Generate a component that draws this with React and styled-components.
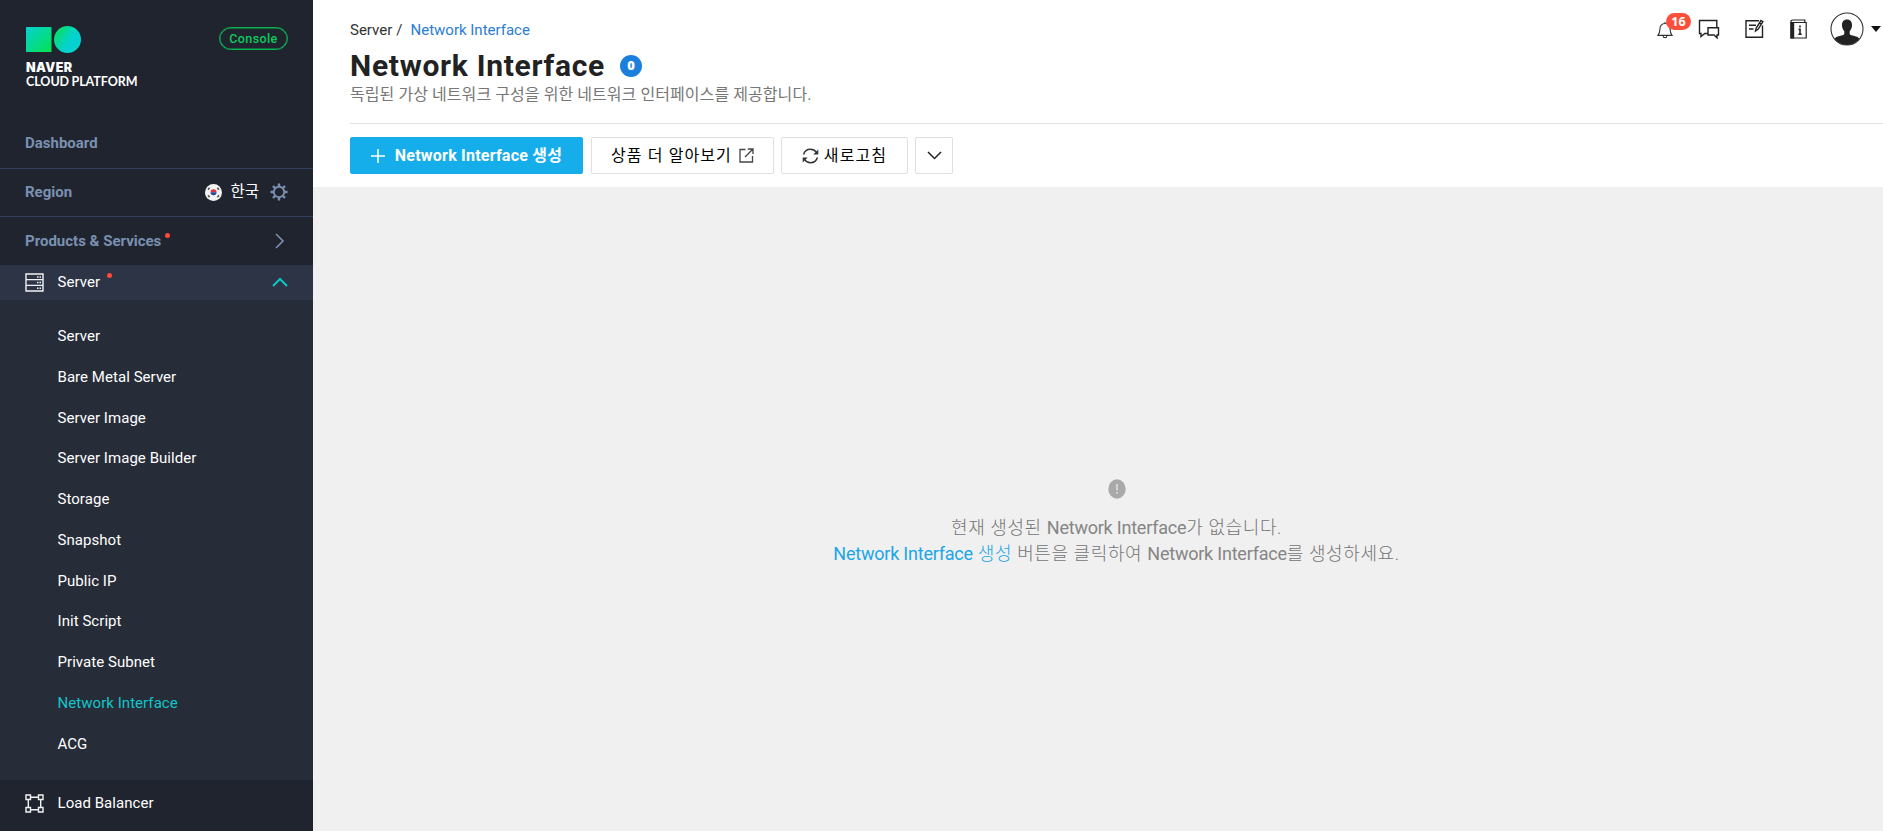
import React from "react";
import styled, { createGlobalStyle } from "styled-components";

const Global = createGlobalStyle`
  * { box-sizing: border-box; }
  body {
    margin: 0;
    background: #fff;
    font-family: Roboto, "Noto Sans CJK KR", sans-serif;
    font-size: 15px;
    color: #222;
    overflow: hidden;
  }
  svg { display: block; flex: none; }
`;

const Page = styled.div`
  display: grid;
  grid-template-columns: 313px minmax(0, 1fr);
  height: 831px;
  overflow: hidden;
`;

/* ---------- sidebar ---------- */

const Sidebar = styled.nav`
  display: flex;
  flex-direction: column;
  background: #20242f;
  color: #fff;
`;

const BrandBar = styled.header`
  display: flex;
  justify-content: space-between;
  align-items: flex-start;
  height: 120px;
  padding: 25px 25px 0 26px;
`;

const Brand = styled.div`
  display: flex;
  flex-direction: column;
`;

const BrandName = styled.span`
  margin-top: ${(p) => (p.$strong ? "8px" : "0")};
  font-family: ${(p) => (p.$strong ? "Inter" : "Lato")}, sans-serif;
  font-size: 12.5px;
  font-weight: ${(p) => (p.$strong ? 900 : 700)};
  line-height: 13.5px;
  letter-spacing: ${(p) => (p.$strong ? "0.45px" : "-0.05px")};
  word-spacing: ${(p) => (p.$strong ? "0" : "-0.6px")};
  white-space: nowrap;
`;

const ConsoleTag = styled.span`
  width: 69px;
  height: 23px;
  margin-top: 2px;
  border: 1.5px solid #0ab253;
  border-radius: 12px;
  color: #0ccb5c;
  box-shadow: inset 0 0 0 0.5px #0ab253;
  font-size: 12.5px;
  font-weight: 500;
  line-height: 21px;
  text-align: center;
  letter-spacing: 0.4px;
`;

const MainRow = styled.div`
  display: flex;
  align-items: center;
  height: ${(p) => p.$height}px;
  padding: 0 25px 0 25px;
  border-bottom: ${(p) => (p.$line ? "1px solid #2f405c" : "none")};
`;

const RowTitle = styled.span`
  padding-bottom: ${(p) => p.$lift || 0}px;
  color: #7a90b0;
  font-size: 15px;
  font-weight: 700;
`;

const NewDot = styled.i`
  align-self: flex-start;
  width: 5px;
  height: 5px;
  margin: ${(p) => p.$top}px 0 0 ${(p) => p.$left}px;
  border-radius: 50%;
  background: #ff4a38;
`;

const RowEnd = styled.div`
  display: flex;
  align-items: center;
  margin-left: auto;
  padding: 0 ${(p) => p.$right || 0}px ${(p) => p.$lift || 0}px 0;
`;

const Country = styled.span`
  margin: 0 11px 1px 8px;
  font-size: 15.5px;
  line-height: 20px;
`;

const ServiceRow = styled.div`
  display: flex;
  align-items: center;
  height: ${(p) => p.$height}px;
  padding: 0 25px 0 25px;
  background: ${(p) => (p.$open ? "#2d3446" : "transparent")};
`;

const ServiceName = styled.span`
  margin-left: 13.5px;
  padding-bottom: 1px;
  letter-spacing: 0.05px;
`;

const SubMenu = styled.ul`
  height: 480px;
  margin: 0;
  padding: 16px 0 0 57.5px;
  list-style: none;
  background: #262c38;
`;

const SubItem = styled.li`
  height: 40.75px;
  line-height: 40.75px;
  letter-spacing: 0.05px;
  color: ${(p) => (p.$active ? "#13c5c9" : "#fff")};
`;

/* ---------- content ---------- */

const Content = styled.main`
  display: flex;
  flex-direction: column;
  min-width: 0;
`;

const Top = styled.header`
  display: flex;
  justify-content: space-between;
  height: 124px;
  margin-left: 37px;
  border-bottom: 1px solid #dfdfdf;
`;

const Heading = styled.div`
  display: flex;
  flex-direction: column;
`;

const Breadcrumb = styled.div`
  display: flex;
  height: 18px;
  margin-top: 21px;
  line-height: 19px;
`;

const Crumb = styled.span`
  margin-left: ${(p) => p.$gap || 0}px;
  color: ${(p) => (p.$current ? "#2b7cd6" : "#333")};
`;

const TitleRow = styled.div`
  display: flex;
  align-items: center;
  height: 42px;
  margin-top: 6px;
`;

const Title = styled.h1`
  margin: 0;
  font-family: Roboto, sans-serif;
  font-size: 30px;
  font-weight: 700;
  line-height: 40px;
  letter-spacing: 0.72px;
`;

const Count = styled.span`
  width: 22px;
  height: 22px;
  margin: -1px 0 0 15px;
  border-radius: 50%;
  background: #1b7fdb;
  color: #fff;
  font-family: "Open Sans", sans-serif;
  font-size: 13px;
  font-weight: 800;
  line-height: 21px;
  text-align: center;
`;

const Description = styled.p`
  margin: -4px 0 0;
  color: #777;
  font-size: 16px;
  line-height: 24px;
  letter-spacing: 0.07px;
  white-space: nowrap;
`;

const Tools = styled.div`
  display: flex;
  align-items: flex-start;
  padding-right: 2px;
`;

const Tool = styled.span`
  position: relative;
  width: 22px;
  margin: 18px ${(p) => p.$gap || 22}px 0 0;
`;

const Badge = styled.span`
  position: absolute;
  left: 10px;
  top: -5px;
  width: 25px;
  height: 17px;
  border-radius: 9px;
  background: #fb4e3b;
  color: #fff;
  font-family: "Open Sans", sans-serif;
  font-size: 12.5px;
  font-weight: 700;
  line-height: 17px;
  text-align: center;
`;

const Account = styled.div`
  display: flex;
  align-items: center;
  gap: 7px;
  margin-top: 12px;
`;

const ButtonBar = styled.div`
  display: flex;
  height: 63px;
  padding: 13px 0 0 37px;
`;

const Button = styled.button`
  display: flex;
  align-items: center;
  justify-content: center;
  width: ${(p) => p.$width}px;
  height: 37px;
  margin: 0 ${(p) => p.$gap || 0}px 0 0;
  padding: 0;
  border: 1px solid ${(p) => (p.$primary ? "#16adeb" : "#dfdfdf")};
  border-radius: 2px;
  background: ${(p) => (p.$primary ? "#16adeb" : "#fff")};
  color: ${(p) => (p.$primary ? "#fff" : "#000")};
  font-family: inherit;
  font-size: 16px;
  font-weight: ${(p) => (p.$primary ? 700 : 400)};
  letter-spacing: ${(p) => (p.$primary ? 0.22 : 1.1)}px;
  white-space: nowrap;
`;

const Label = styled.span`
  margin: 0 ${(p) => p.$right || 0}px 3px ${(p) => p.$left || 0}px;
`;

const Empty = styled.section`
  display: flex;
  flex: 1;
  flex-direction: column;
  align-items: center;
  padding: 292px 0 0 37px;
  background: #f0f0f0;
`;

const EmptyLines = styled.div`
  margin-top: 16px;
`;

const EmptyText = styled.p`
  margin: 0;
  color: #747474;
  font-size: 18px;
  font-weight: 300;
  line-height: 26px;
  letter-spacing: 0.6px;
  text-align: center;
  white-space: nowrap;
`;

const Latin = styled.span`
  color: ${(p) => (p.$link ? "inherit" : "#858585")};
  font-weight: 400;
  letter-spacing: -0.22px;
`;

const Action = styled.a`
  color: #1ba6e8;
`;

/* ---------- drawings ---------- */

const Logo = () => (
  <svg width="56" height="28" viewBox="0 0 56 28">
    <defs>
      <linearGradient id="sq" x1="0" y1="0" x2="1" y2="1">
        <stop offset="0" stopColor="#05d2d3" />
        <stop offset="1" stopColor="#05e14f" />
      </linearGradient>
      <linearGradient id="ci" x1="0" y1="0.1" x2="0.6" y2="0.5">
        <stop offset="0" stopColor="#05e14f" />
        <stop offset="1" stopColor="#05d2cf" />
      </linearGradient>
    </defs>
    <rect x="0" y="2" width="25.5" height="25" fill="url(#sq)" />
    <circle cx="41.5" cy="14.5" r="13.5" fill="url(#ci)" />
  </svg>
);

const Flag = () => (
  <svg width="17" height="17" viewBox="0 0 17 17">
    <circle cx="8.5" cy="8.5" r="8.5" fill="#f4f4f4" />
    <path d="M5.500 8.300a3 3 0 0 1 6 0z" fill="#e0313f" />
    <path d="M5.500 8.300a3 3 0 0 0 6 0z" fill="#27469d" />
    <g stroke="#555" strokeWidth="1.6">
      <path d="M3 5.800 4.600 3.800M12.400 3.800 14 5.800M3 11.200l1.600 2M12.400 13.200l1.600-2" />
    </g>
  </svg>
);

const Gear = () => (
  <svg width="18" height="18" viewBox="0 0 18 18" fill="none" stroke="#7a90b0">
    <circle cx="9" cy="9" r="5.2" strokeWidth="1.9" />
    <g strokeWidth="2.4">
      <path d="M9 .5v3M9 14.500v3M.5 9h3M14.500 9h3M3 3l2.100 2.100M12.900 12.900 15 15M3 15l2.100-2.100M12.900 5.100 15 3" />
    </g>
  </svg>
);

const Chevron = ({ d, w, h, color, sw = 1.6 }) => (
  <svg width={w} height={h} viewBox={`0 0 ${w} ${h}`} fill="none" stroke={color} strokeWidth={sw}>
    <path d={d} />
  </svg>
);

const ServerIcon = () => (
  <svg width="19" height="19" viewBox="0 0 19 19" fill="none" stroke="#f2f2f2" strokeWidth="1.4">
    <path d="M1 1h17v17H1zM1 6.600h17M1 12.400h17" />
    <path d="M12 4h1.500M14.500 4H16M12 9.500h1.500M14.500 9.500H16M12 15.200h1.500M14.500 15.200H16" strokeWidth="1.6" />
  </svg>
);

const BalancerIcon = () => (
  <svg width="19" height="19" viewBox="0 0 19 19" fill="none" stroke="#f2f2f2" strokeWidth="1.4">
    <path d="M1 1h4.500v4.500H1zM13.500 1H18v4.500h-4.500zM1 13.500h4.500V18H1zM13.500 13.500H18V18h-4.500zM5.500 3.300h8M5.500 15.700h8M3.300 5.500v8M15.700 5.500v8" />
  </svg>
);

const Bell = () => (
  <svg width="18" height="22" viewBox="0 0 18 22" fill="none" stroke="#333" strokeWidth="1.1">
    <path d="M2 17.400c1.400-1.700 1.900-3.200 1.900-6.300 0-3.300 1.900-5.600 5.100-5.600s5.100 2.300 5.100 5.600c0 3.100.5 4.600 1.900 6.300zM9 5.500V4M7.300 17.600v1.400c0 .8 3.400.8 3.400 0v-1.400" />
  </svg>
);

const Chat = () => (
  <svg width="22" height="22" viewBox="0 0 22 22" fill="none" stroke="#222" strokeWidth="1.4">
    <path d="M10 15.500H6.800L3 18.500v-3H1.500v-13h17.300V9" />
    <path d="M10 9.800h10.500v7.200H19v2.800L16 17h-6z" />
  </svg>
);

const Note = () => (
  <svg width="22" height="22" viewBox="0 0 22 22" fill="none" stroke="#222" strokeWidth="1.4">
    <path d="M15 2.700H2v16.600h16.500V7.500" />
    <path d="M5 7.200h7M5 11h4.500" strokeWidth="1.6" />
    <path d="m11.500 13 .7-3 4.800-7.500 1.900 1.200-4.800 7.600zM15.500 5l1.900 1.200" />
  </svg>
);

const Guide = () => (
  <svg width="22" height="22" viewBox="0 0 22 22" fill="none" stroke="#222" strokeWidth="1.2">
    <path d="M5 4.500h13.200V20H3V3.800C3 2.500 3.600 2 4.600 2h12.200v2.300" />
    <path d="M3 4.500h2.600V20H3z" fill="#222" />
    <path d="M12 7.500v2M10.500 11.300H12v5M10.300 16.300h3.400" strokeWidth="1.6" />
  </svg>
);

const Avatar = () => (
  <svg width="34" height="34" viewBox="0 0 34 34">
    <defs>
      <clipPath id="avatar"><circle cx="17" cy="17" r="16" /></clipPath>
    </defs>
    <g clipPath="url(#avatar)" fill="#222">
      <path d="M17 7.500c-3.600 0-5.200 2.700-5 6 .1 2.400 1 4.300 2.300 5.700v2.700C13.500 24 6 23 4 27.500V34h26v-6.500c-2-4.500-9.500-3.500-10.300-5.600v-2.700c1.300-1.400 2.200-3.300 2.300-5.700.2-3.300-1.400-6-5-6z" />
    </g>
    <circle cx="17" cy="17" r="16" fill="none" stroke="#333" strokeWidth="1.1" />
  </svg>
);

const Plus = () => (
  <svg width="14" height="14" viewBox="0 0 14 14" stroke="#fff" strokeWidth="1.5">
    <path d="M7 0v14M0 7h14" />
  </svg>
);

const External = () => (
  <svg width="15" height="15" viewBox="0 0 15 15" fill="none" stroke="#444" strokeWidth="1.3">
    <path d="M6.500 1.500H1v12.500h12.500V8M8.800 1H14v5M14 1 6 9" />
  </svg>
);

const Refresh = () => (
  <svg width="17" height="16" viewBox="0 0 17 16" fill="none" stroke="#333" strokeWidth="1.5">
    <path d="M1.600 6.500C2.500 3.300 5.200 1.300 8.500 1.300c2.500 0 4.600 1.200 5.900 3.100M15.400 9.500c-.9 3.200-3.600 5.200-6.900 5.200-2.500 0-4.600-1.200-5.900-3.100" />
    <path d="M16.300 1.500v5h-5zM.7 14.500v-5h5z" fill="#333" stroke="none" />
  </svg>
);

const Alert = () => (
  <svg width="18" height="20" viewBox="0 0 18 20">
    <ellipse cx="9" cy="10" rx="8.7" ry="9.7" fill="#a9a9a9" />
    <path d="M9 5v6.500M9 13v1.800" stroke="#f0f0f0" strokeWidth="1.2" />
  </svg>
);

const items = [
  "Server",
  "Bare Metal Server",
  "Server Image",
  "Server Image Builder",
  "Storage",
  "Snapshot",
  "Public IP",
  "Init Script",
  "Private Subnet",
  "Network Interface",
  "ACG",
];

export default function App() {
  return (
    <Page>
      <Global />
      <Sidebar>
        <BrandBar>
          <Brand>
            <Logo />
            <BrandName $strong>NAVER</BrandName>
            <BrandName>CLOUD PLATFORM</BrandName>
          </Brand>
          <ConsoleTag>Console</ConsoleTag>
        </BrandBar>
        <MainRow $height={49} $line>
          <RowTitle $lift={2}>Dashboard</RowTitle>
        </MainRow>
        <MainRow $height={48} $line>
          <RowTitle $lift={1.5}>Region</RowTitle>
          <RowEnd $lift={1}>
            <Flag />
            <Country>한국</Country>
            <Gear />
          </RowEnd>
        </MainRow>
        <MainRow $height={48}>
          <RowTitle>Products &amp; Services</RowTitle>
          <NewDot $top={16} $left={4} />
          <RowEnd $right={1}>
            <Chevron d="M2 1l7 7-7 7" w={13} h={16} color="#7a90b0" />
          </RowEnd>
        </MainRow>
        <ServiceRow $height={35} $open>
          <ServerIcon />
          <ServiceName>Server</ServiceName>
          <NewDot $top={8} $left={7} />
          <RowEnd $lift={1}>
            <Chevron d="M1 9l7-7 7 7" w={16} h={10} color="#0cc5c5" sw={2} />
          </RowEnd>
        </ServiceRow>
        <SubMenu>
          {items.map((name) => (
            <SubItem key={name} $active={name === "Network Interface"}>{name}</SubItem>
          ))}
        </SubMenu>
        <ServiceRow $height={47}>
          <BalancerIcon />
          <ServiceName>Load Balancer</ServiceName>
        </ServiceRow>
      </Sidebar>

      <Content>
        <Top>
          <Heading>
            <Breadcrumb>
              <Crumb>Server</Crumb>
              <Crumb $gap={4}>/</Crumb>
              <Crumb $gap={8} $current>Network Interface</Crumb>
            </Breadcrumb>
            <TitleRow>
              <Title>Network Interface</Title>
              <Count>0</Count>
            </TitleRow>
            <Description>독립된 가상 네트워크 구성을 위한 네트워크 인터페이스를 제공합니다.</Description>
          </Heading>
          <Tools>
            <Tool $gap={20}><Bell /><Badge>16</Badge></Tool>
            <Tool $gap={24}><Chat /></Tool>
            <Tool><Note /></Tool>
            <Tool $gap={20}><Guide /></Tool>
            <Account>
              <Avatar />
              <svg width="10" height="6" viewBox="0 0 10 6"><path d="M0 0h10L5 6z" fill="#111" /></svg>
            </Account>
          </Tools>
        </Top>
        <ButtonBar>
          <Button $primary $width={233} $gap={8}>
            <Plus />
            <Label $left={10}>Network Interface 생성</Label>
          </Button>
          <Button $width={183} $gap={7}>
            <Label $right={7}>상품 더 알아보기</Label>
            <External />
          </Button>
          <Button $width={127} $gap={7}>
            <Refresh />
            <Label $left={5}>새로고침</Label>
          </Button>
          <Button $width={38}>
            <Chevron d="M1 1l6.500 6.500L14 1" w={15} h={9} color="#222" sw={1.5} />
          </Button>
        </ButtonBar>
        <Empty>
          <Alert />
          <EmptyLines>
            <EmptyText>
              현재 생성된 <Latin>Network Interface</Latin>가 없습니다.
            </EmptyText>
            <EmptyText>
              <Action><Latin $link>Network Interface</Latin> 생성</Action> 버튼을 클릭하여{" "}
              <Latin>Network Interface</Latin>를 생성하세요.
            </EmptyText>
          </EmptyLines>
        </Empty>
      </Content>
    </Page>
  );
}
